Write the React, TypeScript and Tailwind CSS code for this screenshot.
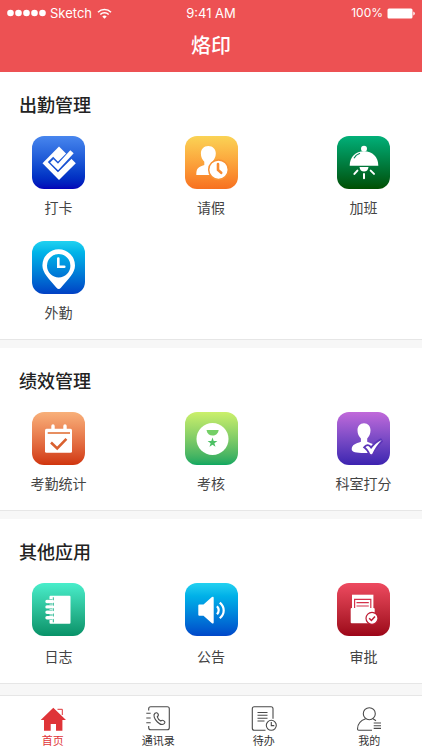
import type { ReactNode } from 'react';
import clsx from 'clsx';

type AppItem = {
  label: string;
  tile: string;
  icon: ReactNode;
};

type Section = {
  title: string;
  items: AppItem[];
  spaced?: boolean;
};

const sections: Section[] = [
  {
    title: '出勤管理',
    items: [
      {
        label: '打卡',
        tile: 'from-[#4886ee] to-[#0500b8]',
        icon: (
          <>
            <mask id="punch-cut">
              <rect width="53" height="53" fill="#fff" />
              <path d="M18.500 23.300 26 31 44 13" fill="none" stroke="#000" strokeWidth="7.500" />
            </mask>
            <path d="M27 10.500 43.800 27.300 27 44 10.500 27.300z" fill="#fff" mask="url(#punch-cut)" />
            <path d="M19.800 24.800 26 31 40 15.800" fill="none" stroke="#fff" strokeWidth="4.600" />
          </>
        ),
      },
      {
        label: '请假',
        tile: 'from-[#fad355] to-[#f7701f]',
        icon: (
          <>
            <path
              d="M23.3 10c4.600 0 7.500 3.200 7.500 7.500 0 3.600-1.600 6-3.300 8.200v3.500c3.500 1.500 6.500 2.600 6.500 9.800H11.300c0-7 2-8 8-10v-3.200c-2-2.200-3.400-4.700-3.400-8.300 0-4.300 2.800-7.500 7.400-7.500z"
              fill="#fff"
            />
            <circle cx="33.500" cy="33.700" r="9.800" fill="#fff" stroke="#f89134" strokeWidth="1.500" />
            <path d="M33 28v6l3.200 2.800" fill="none" stroke="#f88a2f" strokeWidth="2.600" strokeLinecap="round" />
          </>
        ),
      },
      {
        label: '加班',
        tile: 'from-[#02b079] to-[#015000]',
        icon: (
          <>
            <circle cx="27" cy="12.700" r="3" fill="#fff" />
            <path d="M12.700 29.800C12.700 21 18.500 15.300 27 15.300S41.300 21 41.300 29.800z" fill="#fff" />
            <path d="M17 22.300c1.300-2.400 3.200-4 6-5" fill="none" stroke="#06875a" strokeWidth="1.200" />
            <path d="M22.500 31h9c-.3 3-2 4.600-4.500 4.600S22.800 34 22.500 31z" fill="#fff" />
            <path d="M27 38v4.200M20.400 34.600l-3 3.300M33.700 34.600l3.300 3.300" stroke="#fff" strokeWidth="2" strokeLinecap="round" />
          </>
        ),
      },
      {
        label: '外勤',
        tile: 'from-[#20d2f0] to-[#0440c4]',
        icon: (
          <>
            <path
              fillRule="evenodd"
              d="M26.700 8.300A16.300 16.300 0 0 0 10.400 24.600C10.400 32 17 38 24.500 46.800q2.200 2.400 4.400 0C36.500 38 43 32 43 24.600A16.300 16.300 0 0 0 26.700 8.300zm0 4.700a11.700 11.700 0 1 1 0 23.400 11.700 11.700 0 0 1 0-23.400z"
              fill="#fff"
            />
            <path d="M26.300 17.500v8.300h6" fill="none" stroke="#fff" strokeWidth="2.600" strokeLinecap="round" />
          </>
        ),
      },
    ],
  },
  {
    title: '绩效管理',
    items: [
      {
        label: '考勤统计',
        tile: 'from-[#f8b07a] to-[#d0340c]',
        icon: (
          <>
            <rect x="13" y="16.700" width="27" height="24" rx="1.500" fill="#fff" />
            <path d="M21 14v4M33 14v4" stroke="#fff" strokeWidth="3.400" strokeLinecap="round" />
            <path d="M15.700 21h22.300" stroke="#e5824f" strokeWidth="1.800" />
            <path d="M19 30.500l6.200 6 9.200-9.600" fill="none" stroke="#d9602f" strokeWidth="2.600" />
          </>
        ),
      },
      {
        label: '考核',
        tile: 'from-[#cbf06b] to-[#0aa860]',
        icon: (
          <>
            <circle cx="27.500" cy="27" r="16" fill="#fff" />
            <path d="M21.500 18h12.200c-.6 3.600-3 5.600-6.100 5.600s-5.500-2-6.100-5.600z" fill="#74cf66" />
            <path
              d="M27.500 25.600l1.200 3.500h3.700l-3 2.200 1.100 3.500-3-2.100-3 2.100 1.100-3.500-3-2.200h3.700z"
              fill="#4cc064"
            />
          </>
        ),
      },
      {
        label: '科室打分',
        tile: 'from-[#c169da] to-[#3d22b0]',
        icon: (
          <>
            <path
              d="M27 11.300c4 0 6.500 2.900 6.500 7 0 3.600-1.300 6.200-3.300 8.200v3.200c5 2 9 3 9 8 0 2-4 3.300-12 3.300s-12.500-1-12.500-3.800c0-4.500 4-5.700 9.200-7.500v-3.200c-2-2-3.400-4.600-3.400-8.200 0-4.100 2.500-7 6.500-7z"
              fill="#fff"
            />
            <path
              d="M28.500 35.300c1.500-1.700 3-1.600 4-.4l1.600 2.200c3-4.500 6.200-7.200 10.700-9.200-4.300 4.200-7 8.300-9.500 13.800-1 .8-1.800.7-2.300-.2-1.200-2.600-2.500-4.800-4.500-6.200z"
              fill="#fff"
              stroke="#5c35b9"
              strokeWidth="3.600"
              paintOrder="stroke"
            />
          </>
        ),
      },
    ],
  },
  {
    title: '其他应用',
    spaced: true,
    items: [
      {
        label: '日志',
        tile: 'from-[#49eecb] to-[#079268]',
        icon: (
          <>
            <rect x="17.500" y="12.800" width="21" height="28" rx="1" fill="#fff" />
            <path d="M21.300 14.300v25" stroke="#23b890" strokeWidth="1" />
            <path
              d="M15.500 18.500h5M15.500 23.900h5M15.500 29.300h5M15.500 34.700h5"
              stroke="#23b890"
              strokeWidth="4.600"
            />
            <path
              d="M15 18.500h5.500M15 23.900h5.500M15 29.300h5.500M15 34.700h5.500"
              stroke="#fff"
              strokeWidth="3.400"
              strokeLinecap="round"
            />
          </>
        ),
      },
      {
        label: '公告',
        tile: 'from-[#22d1f0] to-[#0347c9]',
        icon: (
          <>
            <path d="M14.300 21.500h4.200l8.400-7.500q1.800-1 1.800.8v24.600q0 1.800-1.800.8l-8.400-7.500h-4.200q-1 0-1-1v-9.200q0-1 1-1z" fill="#fff" />
            <path
              d="M32 23.300c2 2.300 2 5.600 0 8M34.800 19.600c5.200 4.600 5.200 11 0 15.600"
              fill="none"
              stroke="#fff"
              strokeWidth="2.200"
            />
          </>
        ),
      },
      {
        label: '审批',
        tile: 'from-[#ee4a60] to-[#9c0418]',
        icon: (
          <>
            <path d="M15 11.700h21.400V25H15z" fill="#fff" />
            <path d="M17.600 25v-8.600h16.200V25M19.500 19.600h12.300M19.500 23h12.300" fill="none" stroke="#d4304a" strokeWidth="1.200" />
            <rect x="13.700" y="25" width="24" height="15.300" rx="1" fill="#fff" />
            <circle cx="35" cy="35.300" r="6" fill="#fff" stroke="#bd1c33" strokeWidth="1.200" />
            <path d="M32.200 35.200l2.200 2.300 3.600-4" fill="none" stroke="#bd1c33" strokeWidth="1.500" />
          </>
        ),
      },
    ],
  },
];

const tabs: { label: string; icon: ReactNode }[] = [
  {
    label: '首页',
    icon: (
      <>
        <path d="M13.300 1.700 26 14h-3.600v10.700H16V18h-5.300v6.700H4V14H.700z" fill="#df3438" />
        <path d="M17.500 3.300h4.800V9" fill="none" stroke="#df3438" strokeWidth="1" />
      </>
    ),
  },
  {
    label: '通讯录',
    icon: (
      <g fill="none" stroke="#4a4a4a" strokeWidth="1.100">
        <path d="M3.700 4.500V2.700q0-2 2-2h16.600q2 0 2 2v19q0 2-2 2H5.700q-2 0-2-2V20" />
        <path d="M1.300 7.300h4.400M1.300 12h4.400M1.300 16.700h4.400" />
        <path d="M10 7.300c1.300-1 2.300-.7 3 .5.800 1.500.5 2.200-.7 3 .6 2 1.700 3.400 3.500 4.200 1-1 1.900-1 3.100-.1 1.200.8 1.300 1.700.3 2.700-1.500 1.400-4.300.8-6.800-1.600-3.200-3-4.500-7-2.400-8.700z" />
      </g>
    ),
  },
  {
    label: '待办',
    icon: (
      <g fill="none" stroke="#4a4a4a" strokeWidth="1.100">
        <path d="M14.500 24.200H3.300q-2 0-2-2V2.700q0-2 2-2H20q2 0 2 2v10" />
        <path d="M6.500 6.500h10M6.500 9.300h10M6.500 12.200h10M6.500 15h7" />
        <circle cx="20.300" cy="19.300" r="5" />
        <path d="M20.300 16v3.600h3" />
      </g>
    ),
  },
  {
    label: '我的',
    icon: (
      <g fill="none" stroke="#4a4a4a" strokeWidth="1.100">
        <circle cx="13.300" cy="7.700" r="6" />
        <path d="M9.700 12.800C4.500 14.600 1.500 18.700 1.500 23q0 1.200 1.200 1.200H16M17 12.800l3 2" />
        <path d="M17.700 17H25M17.700 19.700H25M17.700 22.400H25" />
      </g>
    ),
  },
];

function StatusBar() {
  return (
    <div className="grid h-[26px] grid-cols-3 items-center px-[7px] font-['Inter','Liberation_Sans',sans-serif] text-[13px] leading-4">
      <div className="flex items-center gap-1">
        <svg width="39" height="8" viewBox="0 0 39 8" fill="#fff" aria-hidden="true">
          <circle cx="3.500" cy="4" r="3.300" />
          <circle cx="11.500" cy="4" r="3.300" />
          <circle cx="19.500" cy="4" r="3.300" />
          <circle cx="27.500" cy="4" r="3.300" />
          <circle cx="35.500" cy="4" r="3.300" />
        </svg>
        <span>Sketch</span>
        <svg width="15" height="11" viewBox="0 0 15 11" className="ml-px" aria-hidden="true">
          <path d="M1 4.200a9.200 9.200 0 0 1 13 0M3.300 6.500a6 6 0 0 1 8.400 0" fill="none" stroke="#fff" strokeWidth="1.600" />
          <path d="M7.500 10.800 5.300 8.500a3.200 3.200 0 0 1 4.400 0z" fill="#fff" />
        </svg>
      </div>
      <span className="text-center">9:41 AM</span>
      <div className="flex items-center justify-end gap-1">
        <span className="text-[12px]">100%</span>
        <svg width="28" height="11" viewBox="0 0 28 11" fill="#fff" aria-hidden="true">
          <rect x=".500" y=".500" width="25" height="10" rx="1.500" />
          <path d="M26.300 3.500q1.500.4 1.500 2t-1.500 2z" />
        </svg>
      </div>
    </div>
  );
}

function AppButton({ item, spaced }: { item: AppItem; spaced?: boolean }) {
  return (
    <button type="button" className="flex w-[53px] flex-col items-center">
      <span className={clsx('block size-[53px] rounded-[12px] bg-linear-to-b', item.tile)}>
        <svg width="53" height="53" viewBox="0 0 53 53" aria-hidden="true">
          {item.icon}
        </svg>
      </span>
      <span className={clsx('text-[14px] leading-5 whitespace-nowrap text-[#444]', spaced ? 'mt-[10px]' : 'mt-[8px]')}>
        {item.label}
      </span>
    </button>
  );
}

export default function App() {
  return (
    <div className="flex min-h-screen flex-col bg-white font-['Noto_Sans_CJK_SC',sans-serif]">
      <header className="bg-[#ed5153] pb-3 text-white">
        <StatusBar />
        <h1 className="pt-1 text-center text-[20px] leading-[30px] font-medium">烙印</h1>
      </header>

      {/* App groups */}
      <main className="flex-1 bg-[#f7f7f7]">
        {sections.map((section) => (
          <section key={section.title} className="mb-2 border-b border-[#e6e6e6] bg-white pt-[19px] pb-[17px]">
            <h2 className="px-[19px] text-[18px] leading-[26px] font-medium text-[#222]">{section.title}</h2>
            <div className="mt-[19px] grid grid-cols-[repeat(3,53px)] justify-between gap-y-6 px-8">
              {section.items.map((item) => (
                <AppButton key={item.label} item={item} spaced={section.spaced} />
              ))}
            </div>
          </section>
        ))}
      </main>

      {/* Bottom tabs */}
      <nav className="grid grid-cols-4 border-t border-[#e6e6e6] bg-white pt-[10px] pb-[2px]">
        {tabs.map((tab, index) => (
          <a
            key={tab.label}
            href="#"
            aria-current={index === 0 ? 'page' : undefined}
            className={clsx('flex flex-col items-center', index === 0 ? 'text-[#df3438]' : 'text-[#333]')}
          >
            <svg width="26" height="26" viewBox="0 0 26 26" aria-hidden="true">
              {tab.icon}
            </svg>
            <span className="text-[11px] leading-4">{tab.label}</span>
          </a>
        ))}
      </nav>
    </div>
  );
}
